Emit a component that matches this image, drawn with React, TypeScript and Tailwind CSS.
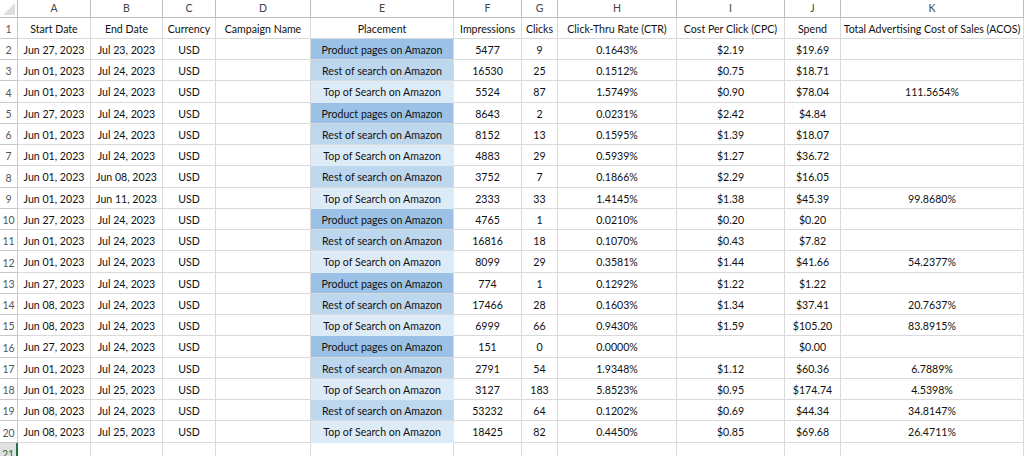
import React from 'react'

const COLS = ['A', 'B', 'C', 'D', 'E', 'F', 'G', 'H', 'I', 'J', 'K']

const HEAD = [
  'Start Date', 'End Date', 'Currency', 'Campaign Name', 'Placement', 'Impressions',
  'Clicks', 'Click-Thru Rate (CTR)', 'Cost Per Click (CPC)', 'Spend', 'Total Advertising Cost of Sales (ACOS)',
]

const P = 'Product pages on Amazon'
const R = 'Rest of search on Amazon'
const T = 'Top of Search on Amazon'

// start, end, placement, impressions, clicks, ctr, cpc, spend, acos
const ROWS: [string, string, string, string, string, string, string, string, string][] = [
  ['Jun 27, 2023', 'Jul 23, 2023', P, '5477', '9', '0.1643%', '$2.19', '$19.69', ''],
  ['Jun 01, 2023', 'Jul 24, 2023', R, '16530', '25', '0.1512%', '$0.75', '$18.71', ''],
  ['Jun 01, 2023', 'Jul 24, 2023', T, '5524', '87', '1.5749%', '$0.90', '$78.04', '111.5654%'],
  ['Jun 27, 2023', 'Jul 24, 2023', P, '8643', '2', '0.0231%', '$2.42', '$4.84', ''],
  ['Jun 01, 2023', 'Jul 24, 2023', R, '8152', '13', '0.1595%', '$1.39', '$18.07', ''],
  ['Jun 01, 2023', 'Jul 24, 2023', T, '4883', '29', '0.5939%', '$1.27', '$36.72', ''],
  ['Jun 01, 2023', 'Jun 08, 2023', R, '3752', '7', '0.1866%', '$2.29', '$16.05', ''],
  ['Jun 01, 2023', 'Jun 11, 2023', T, '2333', '33', '1.4145%', '$1.38', '$45.39', '99.8680%'],
  ['Jun 27, 2023', 'Jul 24, 2023', P, '4765', '1', '0.0210%', '$0.20', '$0.20', ''],
  ['Jun 01, 2023', 'Jul 24, 2023', R, '16816', '18', '0.1070%', '$0.43', '$7.82', ''],
  ['Jun 01, 2023', 'Jul 24, 2023', T, '8099', '29', '0.3581%', '$1.44', '$41.66', '54.2377%'],
  ['Jun 27, 2023', 'Jul 24, 2023', P, '774', '1', '0.1292%', '$1.22', '$1.22', ''],
  ['Jun 08, 2023', 'Jul 24, 2023', R, '17466', '28', '0.1603%', '$1.34', '$37.41', '20.7637%'],
  ['Jun 08, 2023', 'Jul 24, 2023', T, '6999', '66', '0.9430%', '$1.59', '$105.20', '83.8915%'],
  ['Jun 27, 2023', 'Jul 24, 2023', P, '151', '0', '0.0000%', '', '$0.00', ''],
  ['Jun 01, 2023', 'Jul 24, 2023', R, '2791', '54', '1.9348%', '$1.12', '$60.36', '6.7889%'],
  ['Jun 01, 2023', 'Jul 25, 2023', T, '3127', '183', '5.8523%', '$0.95', '$174.74', '4.5398%'],
  ['Jun 08, 2023', 'Jul 24, 2023', R, '53232', '64', '0.1202%', '$0.69', '$44.34', '34.8147%'],
  ['Jun 08, 2023', 'Jul 25, 2023', T, '18425', '82', '0.4450%', '$0.85', '$69.68', '26.4711%'],
]

const FILL: Record<string, string> = {
  [P]: 'bg-[#9bc2e6] border-[#9bc2e6]',
  [R]: 'bg-[#bdd7ee] border-[#bdd7ee]',
  [T]: 'bg-[#ddebf7] border-[#ddebf7]',
}

const grid = 'grid grid-cols-[18px_73px_72px_53px_95px_143px_68px_36px_119px_108px_56px_1fr]'
const cell = 'flex items-center justify-center whitespace-nowrap overflow-hidden border-r border-b border-[#dadada] pt-[3px]'

function Row({ n, cells, h }: { n: number; cells: string[]; h: string }) {
  return (
    <div className={`${grid} ${h}`}>
      <div className="flex items-center justify-center border-r border-b border-[#c8c8c8] pt-[4px] text-[10.5px] text-[#555]">{n}</div>
      {cells.map((c, i) => (
        <div key={i} className={`${cell} ${i === 4 && FILL[c] ? FILL[c] : ''}`}>{c}</div>
      ))}
    </div>
  )
}

export default function App() {
  return (
    <div className="h-[456px] w-[1024px] overflow-hidden bg-white text-[10.6px] text-[#111]" style={{ fontFamily: 'Lato, "Liberation Sans", sans-serif' }}>
      {/* column letters */}
      <div className={`${grid} h-[18px]`}>
        <div className="relative border-r border-b border-[#bdbdbd]">
          <svg className="absolute right-[2px] bottom-[2px]" width="12" height="12" viewBox="0 0 12 12">
            <polygon points="12,0 12,12 0,12" fill="#dedede" />
          </svg>
        </div>
        {COLS.map(c => (
          <div key={c} className="flex items-center justify-center border-r border-b border-[#bdbdbd] pt-[1px] text-[10.5px] text-[#444]">{c}</div>
        ))}
      </div>

      <Row n={1} cells={HEAD} h="h-[21px]" />
      {ROWS.map((r, i) => {
        const [s, e, pl, imp, cl, ctr, cpc, sp, acos] = r
        const n = i + 2
        return (
          <Row key={n} n={n} h={n % 4 === 0 ? 'h-[22px]' : 'h-[21px]'}
            cells={[s, e, 'USD', '', pl, imp, cl, ctr, cpc, sp, acos]} />
        )
      })}

      {/* row 21, active row */}
      <div className={`${grid} h-[21px]`}>
        <div className="flex items-start justify-center border-r-2 border-[#217346] bg-[#e1e1e1] pt-[4px] text-[10.5px] text-[#217346]">21</div>
        {COLS.map(c => (
          <div key={c} className="border-r border-b border-[#dadada]" />
        ))}
      </div>
    </div>
  )
}
